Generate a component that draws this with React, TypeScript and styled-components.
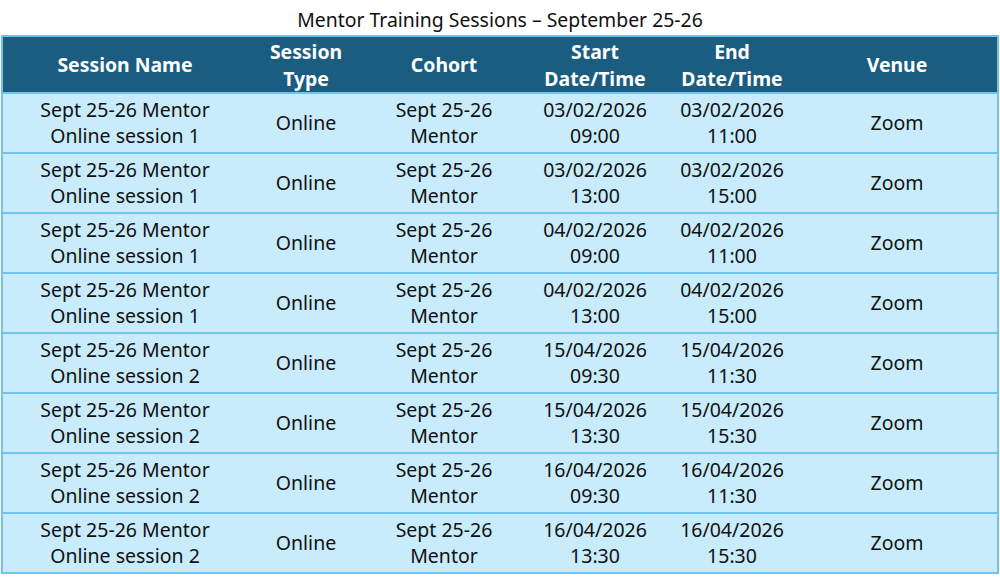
import styled, { createGlobalStyle } from 'styled-components';

const GlobalStyle = createGlobalStyle`
  body {
    margin: 0;
    background: #ffffff;
    font-family: "Noto Sans", "Liberation Sans", sans-serif;
  }
`;

const Page = styled.div`
  width: 1000px;
  height: 584px;
  display: flex;
  flex-direction: column;
`;

const Title = styled.div`
  height: 35px;
  display: flex;
  align-items: flex-end;
  justify-content: center;
  padding-bottom: 2px;
  box-sizing: border-box;
  font-size: 19.4px;
  color: #111;
`;

const Table = styled.div`
  margin: 0 1px;
  border: 2px solid #72c2ea;
  display: grid;
  grid-template-columns: 244px 118px 158px 144px 130px 1fr;
`;

const Head = styled.div`
  background: #1a5d80;
  color: #ffffff;
  font-weight: 700;
  font-size: 19.4px;
  line-height: 27px;
  height: 55px;
  display: flex;
  align-items: center;
  justify-content: center;
  text-align: center;
`;

const Cell = styled.div`
  background: #c8ecfb;
  border-top: 2px solid #74c3ec;
  color: #111;
  font-size: 19.5px;
  line-height: 26px;
  height: 58px;
  display: flex;
  align-items: center;
  justify-content: center;
  text-align: center;
`;

type Session = {
  name: string;
  startDate: string;
  startTime: string;
  endDate: string;
  endTime: string;
};

const sessions: Session[] = [
  { name: 'Online session 1', startDate: '03/02/2026', startTime: '09:00', endDate: '03/02/2026', endTime: '11:00' },
  { name: 'Online session 1', startDate: '03/02/2026', startTime: '13:00', endDate: '03/02/2026', endTime: '15:00' },
  { name: 'Online session 1', startDate: '04/02/2026', startTime: '09:00', endDate: '04/02/2026', endTime: '11:00' },
  { name: 'Online session 1', startDate: '04/02/2026', startTime: '13:00', endDate: '04/02/2026', endTime: '15:00' },
  { name: 'Online session 2', startDate: '15/04/2026', startTime: '09:30', endDate: '15/04/2026', endTime: '11:30' },
  { name: 'Online session 2', startDate: '15/04/2026', startTime: '13:30', endDate: '15/04/2026', endTime: '15:30' },
  { name: 'Online session 2', startDate: '16/04/2026', startTime: '09:30', endDate: '16/04/2026', endTime: '11:30' },
  { name: 'Online session 2', startDate: '16/04/2026', startTime: '13:30', endDate: '16/04/2026', endTime: '15:30' },
];

function App() {
  return (
    <Page>
      <GlobalStyle />
      <Title>Mentor Training Sessions – September 25-26</Title>
      <Table>
        <Head>Session Name</Head>
        <Head>Session<br />Type</Head>
        <Head>Cohort</Head>
        <Head>Start<br />Date/Time</Head>
        <Head>End<br />Date/Time</Head>
        <Head>Venue</Head>

        {sessions.map((s, i) => (
          <>
            <Cell key={`n${i}`}>Sept 25-26 Mentor<br />{s.name}</Cell>
            <Cell key={`t${i}`}>Online</Cell>
            <Cell key={`c${i}`}>Sept 25-26<br />Mentor</Cell>
            <Cell key={`s${i}`}>{s.startDate}<br />{s.startTime}</Cell>
            <Cell key={`e${i}`}>{s.endDate}<br />{s.endTime}</Cell>
            <Cell key={`v${i}`}>Zoom</Cell>
          </>
        ))}
      </Table>
    </Page>
  );
}

export default App;
